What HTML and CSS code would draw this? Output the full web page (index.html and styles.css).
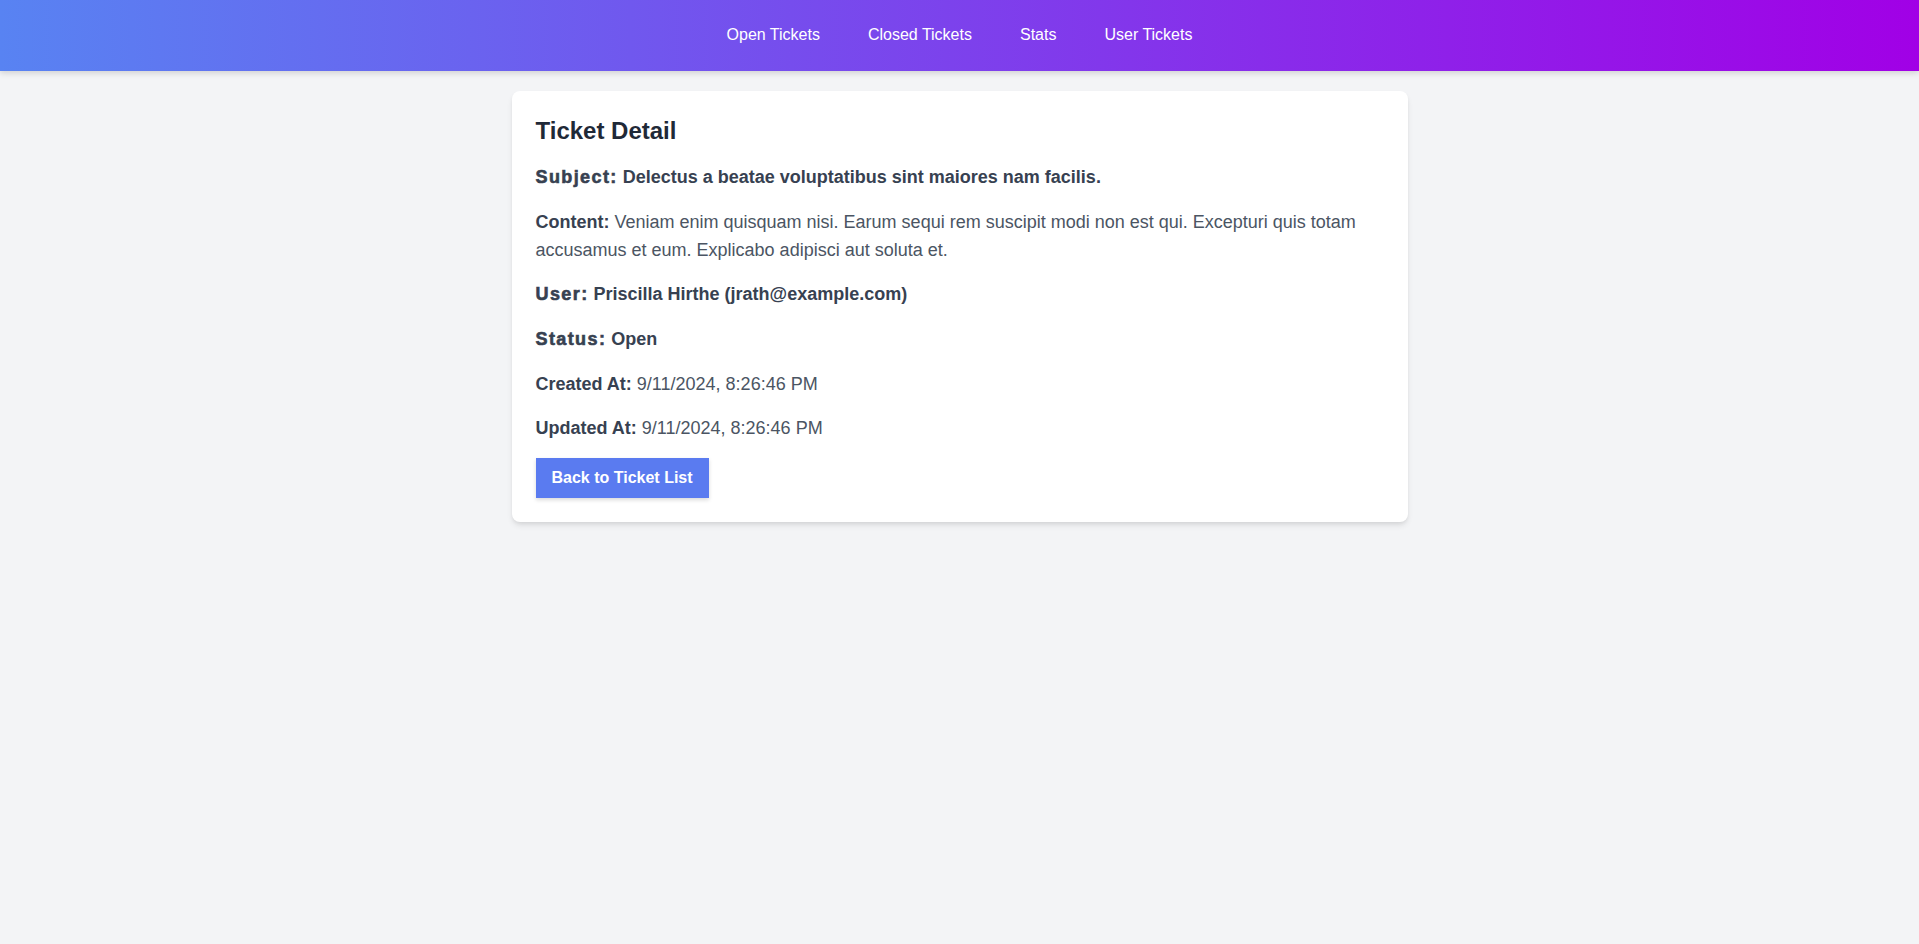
FILE: index.html
```html
<!DOCTYPE html>
<html lang="en">
<head>
<meta charset="utf-8">
<title>Ticket Detail</title>
<link rel="stylesheet" href="styles.css">
</head>
<body>
<nav class="navbar">
  <a class="nav-link" href="#">Open Tickets</a>
  <a class="nav-link" href="#">Closed Tickets</a>
  <a class="nav-link" href="#">Stats</a>
  <a class="nav-link" href="#">User Tickets</a>
</nav>
<main class="card">
  <h2 class="title">Ticket Detail</h2>
  <h3 class="field strong-field"><span class="label heavy">Subject:</span> Delectus a beatae voluptatibus sint maiores nam facilis.</h3>
  <p class="field"><span class="label">Content:</span> Veniam enim quisquam nisi. Earum sequi rem suscipit modi non est qui. Excepturi quis totam accusamus et eum. Explicabo adipisci aut soluta et.</p>
  <p class="field strong-field"><span class="label heavy">User:</span> Priscilla Hirthe (jrath@example.com)</p>
  <p class="field strong-field"><span class="label heavy">Status:</span> Open</p>
  <p class="field"><span class="label">Created At:</span> 9/11/2024, 8:26:46 PM</p>
  <p class="field"><span class="label">Updated At:</span> 9/11/2024, 8:26:46 PM</p>
  <button class="back-btn" type="button">Back to Ticket List</button>
</main>
</body>
</html>
```
FILE: styles.css
```css
* { box-sizing: border-box; }
html, body {
  margin: 0;
  padding: 0;
}
body {
  background: #f3f4f6;
  font-family: "Liberation Sans", Arial, sans-serif;
  min-height: 944px;
}
.navbar {
  height: 71px;
  padding-bottom: 1px;
  display: flex;
  align-items: center;
  justify-content: center;
  gap: 48px;
  background: linear-gradient(90deg, #5883f2 0%, #a100e6 100%);
  box-shadow: 0 2px 6px rgba(0, 0, 0, 0.15);
}
.nav-link {
  color: #ffffff;
  text-decoration: none;
  font-size: 16px;
  line-height: 24px;
}
.card {
  width: 896px;
  margin: 20px auto 0;
  background: #ffffff;
  border-radius: 8px;
  box-shadow: 0 4px 6px -1px rgba(0, 0, 0, 0.1), 0 2px 4px -1px rgba(0, 0, 0, 0.06);
  padding: 24px;
}
.title {
  margin: 0 0 16px;
  font-size: 24px;
  line-height: 32px;
  font-weight: 700;
  color: #1f2937;
}
.field {
  margin: 0 0 16px;
  font-size: 18px;
  line-height: 28px;
  font-weight: 400;
  color: #4b5563;
}
.strong-field {
  font-weight: 700;
  line-height: 29px;
  color: #374151;
}
.label {
  font-weight: 700;
  color: #374151;
}
.heavy {
  -webkit-text-stroke: 0.6px #374151;
  letter-spacing: 1.4px;
}
.back-btn {
  display: block;
  border: none;
  border-radius: 0;
  background: #5a7bf0;
  color: #ffffff;
  font-family: "Liberation Sans", Arial, sans-serif;
  font-size: 16px;
  line-height: 24px;
  font-weight: 700;
  padding: 8px 16px;
  box-shadow: 0 2px 4px rgba(0, 0, 0, 0.15);
  cursor: pointer;
}
```
